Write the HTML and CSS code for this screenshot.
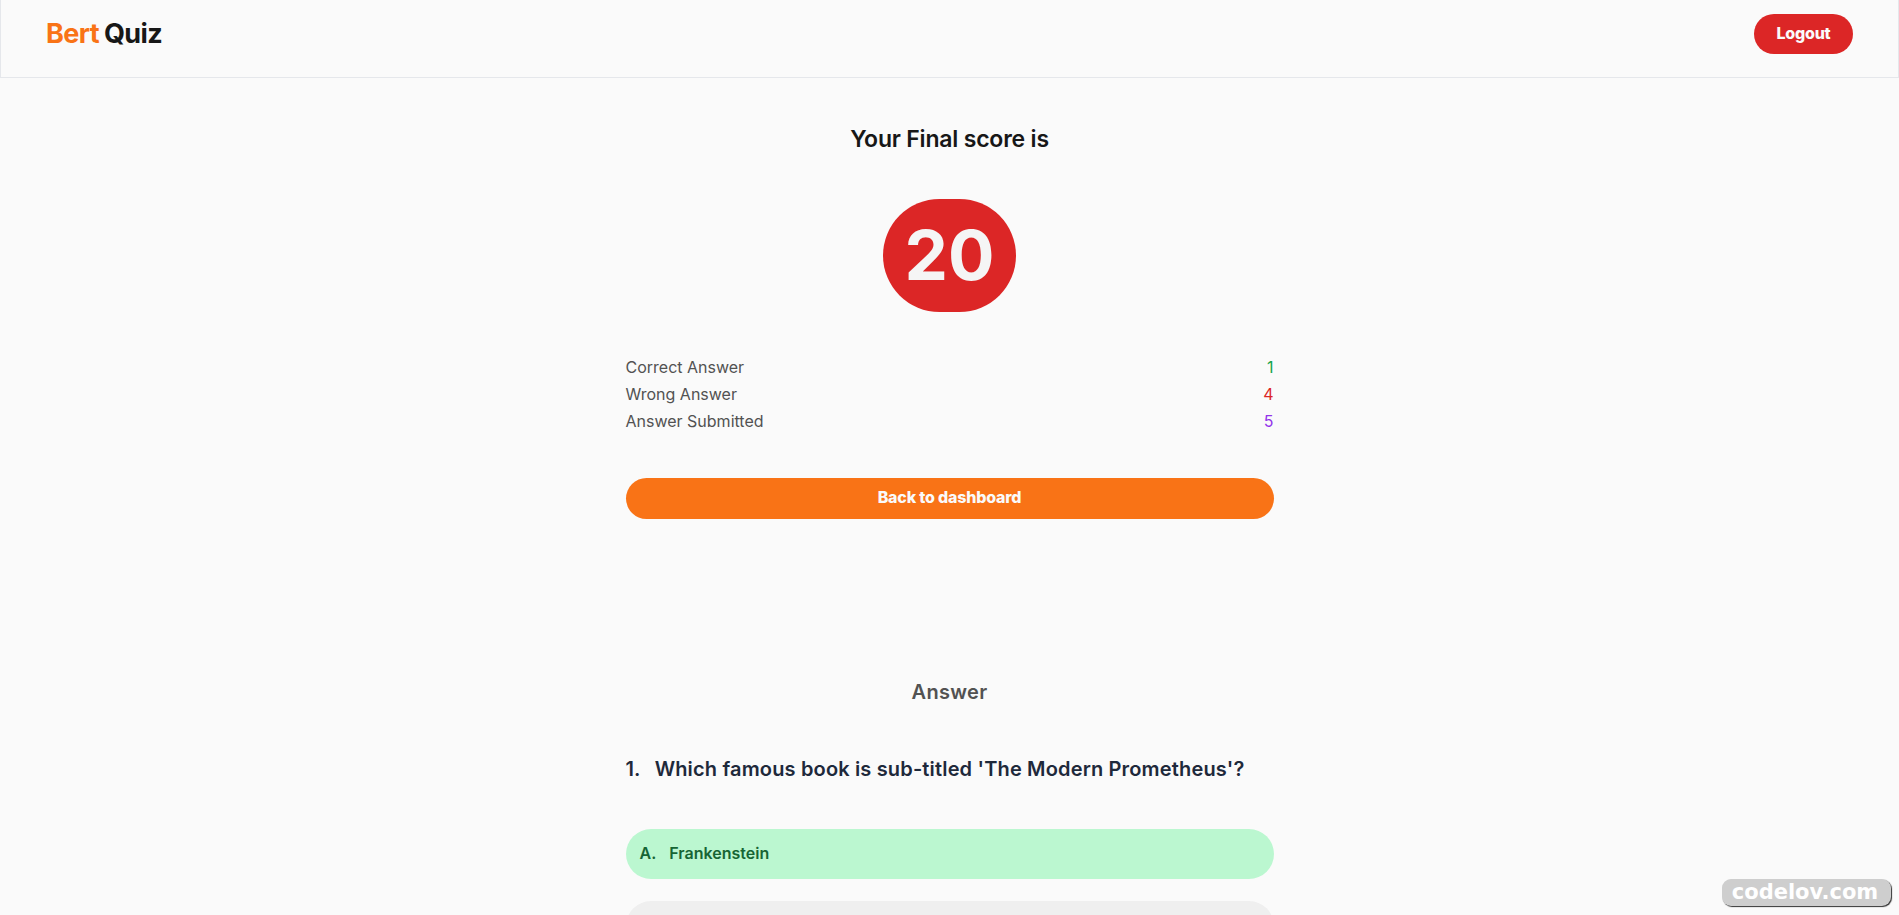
FILE: index.html
```html
<!DOCTYPE html>
<html lang="en">
<head>
<meta charset="utf-8">
<title>Bert Quiz</title>
<link rel="stylesheet" href="styles.css">
</head>
<body>
<header class="navbar">
  <div class="logo"><span class="logo-accent">Bert</span> Quiz</div>
  <button class="logout">Logout</button>
</header>
<main class="result">
  <h1 class="title">Your Final score is</h1>
  <div class="score">20</div>
  <dl class="stats">
    <div class="stat"><dt>Correct Answer</dt><dd class="correct">1</dd></div>
    <div class="stat"><dt>Wrong Answer</dt><dd class="wrong">4</dd></div>
    <div class="stat"><dt>Answer Submitted</dt><dd class="submitted">5</dd></div>
  </dl>
  <button class="back">Back to dashboard</button>
  <h2 class="subtitle">Answer</h2>
  <section class="question">
    <h3 class="question-text"><span>1.</span><span>Which famous book is sub-titled 'The Modern Prometheus'?</span></h3>
    <ul class="options">
      <li class="option option-correct"><span>A.</span><span>Frankenstein</span></li>
      <li class="option"></li>
    </ul>
  </section>
</main>
<div class="watermark">codelov.com</div>
</body>
</html>
```
FILE: styles.css
```css
* { box-sizing: border-box; margin: 0; padding: 0; }
body {
  height: 915px;
  overflow: hidden;
  background: #fafafa;
  color: #171717;
  font-family: Inter, sans-serif;
  font-size: 16px;
  line-height: 24px;
}
button { border: 0; font: inherit; font-weight: 800; color: #fafafa; }
.navbar {
  display: flex;
  justify-content: space-between;
  align-items: flex-start;
  height: 78px;
  padding: 13px 45px 0;
  border: 1px solid #e5e7eb;
  border-top: 0;
}
.logo { font-size: 27px; line-height: 42px; font-weight: 650; letter-spacing: -0.6px; word-spacing: -0.8px; }
.logo-accent { color: #f97316; }
.logout {
  width: 99px;
  height: 40px;
  margin-top: 1px;
  padding-bottom: 2px;
  border-radius: 20px;
  background: #dc2626;
  letter-spacing: -0.25px;
}
.result {
  display: flex;
  flex-direction: column;
  align-items: center;
  width: 648px;
  margin: 0 auto;
  padding-top: 45px;
}
.title { font-size: 23px; line-height: 32px; font-weight: 600; letter-spacing: -0.2px; }
.score {
  display: flex;
  align-items: center;
  justify-content: center;
  width: 133px;
  height: 113px;
  margin-top: 44px;
  border-radius: 57px;
  background: #dc2626;
  color: #f5f5f5;
  font-size: 69px;
  line-height: 69px;
  font-weight: 700;
}
.stats { width: 100%; margin-top: 42px; color: #525252; }
.stat { display: flex; justify-content: space-between; height: 27px; line-height: 27px; }
.correct { color: #16a34a; }
.wrong { color: #dc2626; }
.submitted { color: #9333ea; }
.back {
  width: 100%;
  height: 41px;
  margin-top: 43px;
  padding-bottom: 3px;
  border-radius: 21px;
  background: #f97316;
  letter-spacing: -0.2px;
}
.subtitle { margin-top: 159px; color: #525252; font-size: 20px; line-height: 28px; font-weight: 600; letter-spacing: 0.3px; }
.question { width: 100%; margin-top: 49px; }
.question-text {
  display: flex;
  gap: 14px;
  color: #1e293b;
  font-size: 20px;
  line-height: 28px;
  font-weight: 600;
  letter-spacing: 0.16px;
}
.options { display: grid; gap: 22px; margin-top: 46px; list-style: none; }
.option {
  display: flex;
  align-items: center;
  gap: 13px;
  height: 50px;
  padding: 0 14px 2px;
  border-radius: 25px;
  background: #efefef;
  font-weight: 600;
}
.option-correct { background: #bbf7d0; color: #166534; }
.watermark {
  position: absolute;
  right: 8px;
  bottom: 9px;
  width: 169px;
  height: 27px;
  padding-right: 3px;
  border-radius: 9px;
  background: #cecece;
  box-shadow: 1px 1px 1px #333;
  color: #fff;
  font: bold 21px/27px "DejaVu Sans", sans-serif;
  text-align: center;
}
```
